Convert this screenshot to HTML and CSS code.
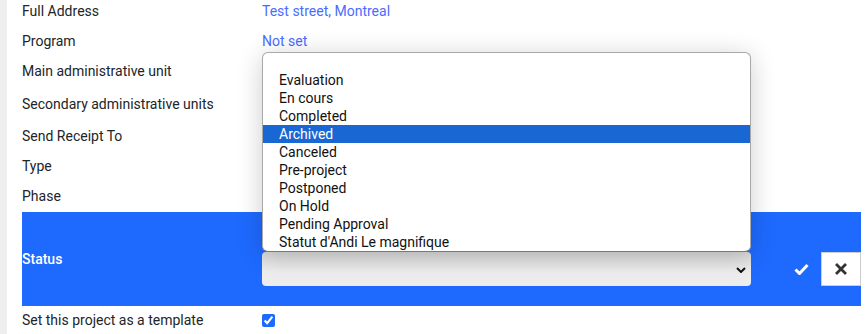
FILE: index.html
```html
<!DOCTYPE html>
<html>
<head>
<meta charset="utf-8">
<link rel="stylesheet" href="styles.css">
</head>
<body>
<div class="page">
  <div class="edge"></div>
  <main class="details">
    <div class="row row-first">
      <div class="label">Full Address</div>
      <div class="value"><a class="link">Test street, Montreal</a></div>
    </div>
    <div class="row">
      <div class="label">Program</div>
      <div class="value"><a class="link">Not set</a></div>
    </div>
    <div class="row">
      <div class="label">Main administrative unit</div>
      <div class="value"></div>
    </div>
    <div class="row row-tall">
      <div class="label">Secondary administrative units</div>
      <div class="value"></div>
    </div>
    <div class="row">
      <div class="label">Send Receipt To</div>
      <div class="value"></div>
    </div>
    <div class="row">
      <div class="label">Type</div>
      <div class="value"></div>
    </div>
    <div class="row">
      <div class="label">Phase</div>
      <div class="value"></div>
    </div>
    <div class="row row-edit">
      <div class="label label-edit">Status</div>
      <div class="editor">
        <div class="select-wrap">
          <div class="popup">
            <div class="opt"></div>
            <div class="opt">Evaluation</div>
            <div class="opt">En cours</div>
            <div class="opt">Completed</div>
            <div class="opt selected">Archived</div>
            <div class="opt">Canceled</div>
            <div class="opt">Pre-project</div>
            <div class="opt">Postponed</div>
            <div class="opt">On Hold</div>
            <div class="opt">Pending Approval</div>
            <div class="opt">Statut d'Andi Le magnifique</div>
          </div>
          <div class="select">
            <svg class="chev" width="10" height="6" viewBox="0 0 10 6"><path d="M1 1l4 4 4-4" fill="none" stroke="#111" stroke-width="2"/></svg>
          </div>
        </div>
        <button class="btn btn-ok">
          <svg width="15" height="12" viewBox="0 0 15 12"><path d="M1.5 6.5l4 4 8-8.5" fill="none" stroke="#fff" stroke-width="3" stroke-linejoin="miter"/></svg>
        </button>
        <button class="btn btn-cancel">
          <svg width="12" height="12" viewBox="0 0 12 12"><path d="M2 2l8 8M10 2l-8 8" fill="none" stroke="#333" stroke-width="2.8" stroke-linecap="square"/></svg>
        </button>
      </div>
    </div>
    <div class="row row-last">
      <div class="label">Set this project as a template</div>
      <div class="value"><input class="check" type="checkbox" checked></div>
    </div>
  </main>
</div>
</body>
</html>
```

FILE: styles.css
```css
html, body {
  margin: 0;
  padding: 0;
  background: #fff;
}
body {
  font-family: Roboto, "Liberation Sans", sans-serif;
  font-size: 14px;
  color: #212529;
  overflow: hidden;
}
.page {
  display: flex;
  height: 334px;
}
.edge {
  width: 7px;
  background: #eeeeee;
  flex: none;
}
.details {
  margin-left: 15px;
  width: 839px;
  display: flex;
  flex-direction: column;
}
.row {
  display: flex;
  align-items: center;
  height: 30px;
  flex: none;
}
.row-first {
  height: 22px;
  padding-bottom: 4px;
}
.row-tall {
  height: 35px;
}
.label {
  width: 240px;
  flex: none;
  line-height: 20px;
}
.value {
  flex: 1;
  line-height: 20px;
}
.link {
  color: #4a6cff;
  cursor: pointer;
}
.row-edit {
  margin-top: 1px;
  height: 94px;
  background: #1e6aff;
  align-items: stretch;
}
.label-edit {
  color: #fff;
  font-weight: 500;
  display: flex;
  align-items: center;
  padding-bottom: 1px;
}
.editor {
  flex: 1;
  display: flex;
  align-items: flex-end;
  padding-bottom: 20px;
}
.select-wrap {
  position: relative;
  width: 489px;
  height: 34px;
}
.select {
  height: 34px;
  border-radius: 4px;
  background: linear-gradient(#dadada, #eeeeee 60%, #ececec);
  display: flex;
  align-items: center;
  justify-content: flex-end;
  padding-right: 5px;
  box-sizing: border-box;
}
.chev {
  display: block;
  margin-top: 1px;
}
.popup {
  position: absolute;
  left: 0;
  bottom: 34px;
  width: 489px;
  box-sizing: border-box;
  background: #fff;
  border: 1px solid #a8a8a8;
  border-bottom-color: #6c7a90;
  border-radius: 6px;
  box-shadow: 0 4px 26px rgba(0, 0, 0, 0.2);
  overflow: hidden;
  color: #111;
  z-index: 2;
}
.opt {
  height: 18px;
  line-height: 18px;
  padding-left: 16px;
  white-space: nowrap;
}
.opt.selected {
  background: #1967d2;
  color: #fff;
}
.btn {
  width: 40px;
  height: 34px;
  margin: 0;
  padding: 0;
  display: flex;
  align-items: center;
  justify-content: center;
  box-sizing: border-box;
  cursor: pointer;
}
.btn svg {
  display: block;
}
.btn-ok {
  margin-left: 30px;
  background: transparent;
  border: 0;
}
.btn-cancel {
  background: #fff;
  border: 1px solid #cccccc;
}
.row-last {
  height: 28px;
}
.check {
  margin: 0;
  width: 13px;
  height: 13px;
  accent-color: #1e6aff;
  display: block;
}
```
